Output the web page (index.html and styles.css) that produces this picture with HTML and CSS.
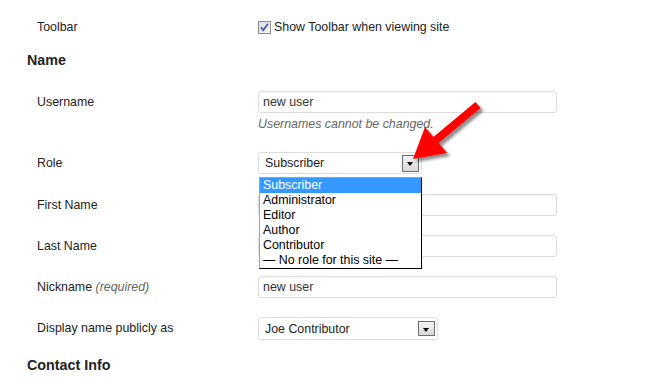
FILE: index.html
```html
<!DOCTYPE html>
<html>
<head>
<meta charset="utf-8">
<link rel="stylesheet" href="styles.css">
</head>
<body>
<div class="page">
  <div class="row toolbar-row">
    <div class="label">Toolbar</div>
    <div class="field">
      <div class="check">
        <svg class="cb" width="13" height="13" viewBox="0 0 13 13">
          <defs>
            <linearGradient id="cbg" x1="0" y1="0" x2="1" y2="1">
              <stop offset="0" stop-color="#dcdcdc"/>
              <stop offset="1" stop-color="#f8f8f8"/>
            </linearGradient>
          </defs>
          <rect x="0.5" y="0.5" width="12" height="12" fill="url(#cbg)" stroke="#8e8f8f"/>
          <path d="M3 6.3 L5.2 9.2 L10 2.8" fill="none" stroke="#4a5aa8" stroke-width="1.8"/>
        </svg>
        <span>Show Toolbar when viewing site</span>
      </div>
    </div>
  </div>

  <h2 class="section">Name</h2>

  <div class="row username-row">
    <div class="label">Username</div>
    <div class="field">
      <div class="input">new user</div>
      <p class="desc">Usernames cannot be changed.</p>
    </div>
  </div>

  <div class="row role-row">
    <div class="label">Role</div>
    <div class="field">
      <div class="select role-select"><span>Subscriber</span><span class="btn"></span></div>
      <ul class="listbox">
        <li class="sel">Subscriber</li>
        <li>Administrator</li>
        <li>Editor</li>
        <li>Author</li>
        <li>Contributor</li>
        <li>— No role for this site —</li>
      </ul>
    </div>
  </div>

  <div class="row">
    <div class="label">First Name</div>
    <div class="field"><div class="input"></div></div>
  </div>

  <div class="row">
    <div class="label">Last Name</div>
    <div class="field"><div class="input"></div></div>
  </div>

  <div class="row">
    <div class="label">Nickname <em>(required)</em></div>
    <div class="field"><div class="input">new user</div></div>
  </div>

  <div class="row display-row">
    <div class="label">Display name publicly as</div>
    <div class="field">
      <div class="select display-select"><span>Joe Contributor</span><span class="btn"></span></div>
    </div>
  </div>

  <h2 class="section contact">Contact Info</h2>
</div>

<svg class="arrow" width="650" height="379" viewBox="0 0 650 379">
  <defs>
    <filter id="shadow" x="-20%" y="-20%" width="150%" height="150%">
      <feGaussianBlur in="SourceAlpha" stdDeviation="1.6"/>
      <feOffset dx="3" dy="3" result="b"/>
      <feComponentTransfer><feFuncA type="linear" slope="0.45"/></feComponentTransfer>
      <feMerge><feMergeNode/><feMergeNode in="SourceGraphic"/></feMerge>
    </filter>
  </defs>
  <polygon filter="url(#shadow)" fill="#ff0000"
    points="475.4,101.9 433.4,136.9 425,127 413,159 447,153 438.6,143.1 480.6,108.1"/>
</svg>
</body>
</html>
```

FILE: styles.css
```css
html, body {
  margin: 0;
  padding: 0;
  background: #ffffff;
}

body {
  font-family: "Liberation Sans", Arial, sans-serif;
  font-size: 12.4px;
  color: #222222;
  position: relative;
  width: 650px;
  height: 379px;
  overflow: hidden;
}

.page {
  padding: 17px 0 0 27px;
}

.row {
  display: flex;
  align-items: flex-start;
  margin-left: 10px;
  margin-bottom: 19px;
}

.label {
  width: 221px;
  flex: none;
  line-height: 22px;
}

.label em {
  color: #666666;
}

.field {
  position: relative;
}

.toolbar-row {
  margin-bottom: 13px;
}

.toolbar-row .label {
  line-height: 20px;
}

.check {
  display: flex;
  align-items: center;
  height: 20px;
  gap: 3px;
}

.cb {
  display: block;
  flex: none;
}

.section {
  font-size: 14.3px;
  font-weight: bold;
  line-height: 20px;
  margin: 0 0 21px 0;
  color: #222222;
}

.section.contact {
  margin-top: -4px;
  margin-bottom: 0;
}

.input {
  box-sizing: border-box;
  width: 299px;
  height: 22px;
  border: 1px solid #dddddd;
  border-radius: 3px;
  box-shadow: inset 0 1px 2px rgba(0, 0, 0, 0.04);
  padding: 0 4px;
  line-height: 20px;
  color: #333333;
}

.desc {
  margin: 3px 0 0 0;
  line-height: 16px;
  font-style: italic;
  color: #666666;
}

.username-row {
  margin-bottom: 20px;
}

.role-row {
  margin-bottom: 20px;
}

.select {
  box-sizing: border-box;
  height: 22px;
  border: 1px solid #dddddd;
  border-radius: 3px;
  display: flex;
  align-items: center;
  justify-content: space-between;
  padding: 0 2px 0 6px;
  color: #222222;
}

.role-select {
  width: 164px;
}

.display-select {
  width: 180px;
  height: 23px;
  padding-right: 2px;
}

.btn {
  box-sizing: border-box;
  width: 17px;
  height: 17px;
  border: 1px solid #6f6f6f;
  background: linear-gradient(#f4f4f4, #d9d9d9);
  position: relative;
  flex: none;
}

.display-select .btn {
  height: 15px;
}

.btn::after {
  content: "";
  position: absolute;
  left: 4px;
  top: 50%;
  margin-top: -1px;
  border-left: 3.5px solid transparent;
  border-right: 3.5px solid transparent;
  border-top: 4px solid #000000;
}

.listbox {
  position: absolute;
  top: 25px;
  left: 1px;
  width: 163px;
  box-sizing: border-box;
  margin: 0;
  padding: 0;
  list-style: none;
  background: #ffffff;
  border: 1px solid #000000;
  border-left-color: #a0a0a0;
  border-top-color: #a0a0a0;
  z-index: 2;
}

.listbox li {
  height: 15px;
  line-height: 15px;
  padding-left: 3px;
  color: #000000;
  white-space: nowrap;
}

.listbox li.sel {
  background: #3399ff;
  color: #ffffff;
}

.arrow {
  position: absolute;
  left: 0;
  top: 0;
  pointer-events: none;
  z-index: 5;
}
```
